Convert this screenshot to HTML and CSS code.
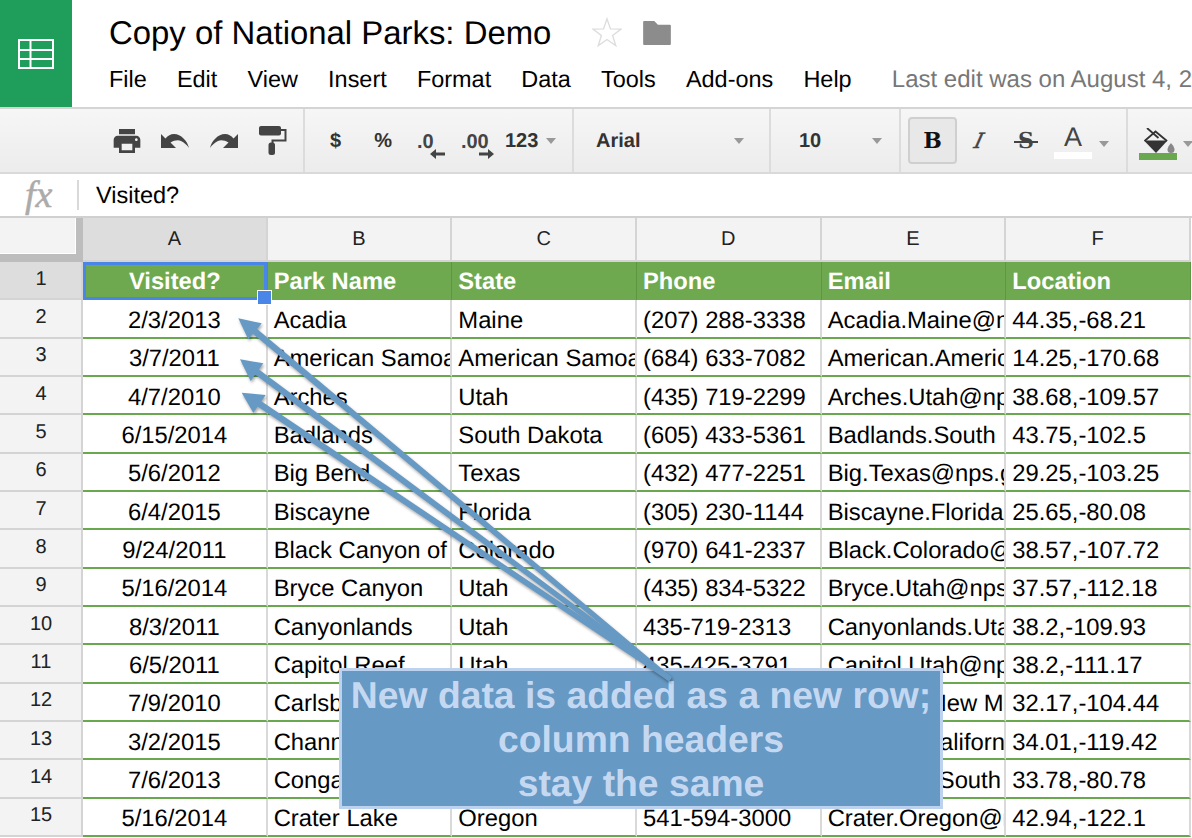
FILE: index.html
```html
<!DOCTYPE html>
<html lang="en">
<head>
<meta charset="utf-8">
<title>Copy of National Parks: Demo</title>
<link rel="stylesheet" href="styles.css">
</head>
<body>
<div class="page">
  <header class="topbar">
    <div class="logo">
      <svg width="36" height="30" viewBox="0 0 36 30"><path class="logo-lines" d="M1 1h34v28H1zM1 11h34M1 20h34M12.500 1v28"/></svg>
    </div>
    <div class="titles">
      <div class="title-row">
        <span class="doc-title">Copy of National Parks: Demo</span>
        <svg class="star" width="30" height="30" viewBox="0 0 32 32"><path d="M16 2l3.700 10.700 11.300.2-9 6.800 3.300 10.800-9.300-6.500-9.300 6.500 3.300-10.800-9-6.800 11.300-.2z"/></svg>
        <svg class="folder" width="30" height="24" viewBox="0 0 30 26"><path d="M1 0h11l4 4h13a1 1 0 0 1 1 1v20a1 1 0 0 1-1 1H1a1 1 0 0 1-1-1V1a1 1 0 0 1 1-1z"/></svg>
      </div>
      <nav class="menu">
        <span>File</span><span>Edit</span><span>View</span><span>Insert</span><span>Format</span><span>Data</span><span>Tools</span><span>Add-ons</span><span>Help</span>
        <span class="last-edit">Last edit was on August 4, 2015</span>
      </nav>
    </div>
  </header>

  <div class="toolbar">
    <div class="group g-actions">
      <svg class="ic ic-print" width="32" height="32" viewBox="0 0 24 24"><path d="M19 8H5c-1.660 0-3 1.340-3 3v6h4v4h12v-4h4v-6c0-1.660-1.340-3-3-3zm-3 11H8v-5h8v5zm3-7c-.55 0-1-.45-1-1s.45-1 1-1 1 .45 1 1-.45 1-1 1zm-1-9H6v4h12V3z"/></svg>
      <svg class="ic ic-undo" width="28" height="16" viewBox="0 0 28 16"><path d="M0 1v14h15l-5.500-5.500C13 7.500 17 6.500 20 8c3 1.500 6 4 8 7C26.500 8 20 1 13 1 9.500 1 7 2.500 4.500 5.500z"/></svg>
      <svg class="ic ic-redo" width="28" height="16" viewBox="0 0 28 16"><path d="M28 1v14H13l5.500-5.500C15 7.500 11 6.500 8 8c-3 1.500-6 4-8 7C1.500 8 8 1 15 1c3.500 0 6 1.500 8.500 4.500z"/></svg>
      <svg class="ic ic-roller" width="28" height="29" viewBox="0 0 28 29"><rect width="22" height="9.500" rx="2"/><path class="roller-arm" d="M21 4h5.500v10.500H13.500V18"/><rect x="9.500" y="16.500" width="6.500" height="12.500" rx="2.500"/></svg>
    </div>
    <div class="group g-format">
      <span class="tb-text t-dollar">$</span>
      <span class="tb-text t-pct">%</span>
      <span class="dec t-dec0"><span>.0</span><svg width="15" height="10" viewBox="0 0 15 10"><path d="M0 5l6-5v3.500h9v3H6V10z"/></svg></span>
      <span class="dec t-dec00"><span>.00</span><svg width="15" height="10" viewBox="0 0 15 10"><path d="M15 5L9 0v3.500H0v3h9V10z"/></svg></span>
      <span class="tb-text t-123">123</span>
      <span class="caret c-123"></span>
    </div>
    <div class="group g-font">
      <span class="tb-text">Arial</span>
      <span class="caret"></span>
    </div>
    <div class="group g-size">
      <span class="tb-text">10</span>
      <span class="caret"></span>
    </div>
    <div class="group g-style">
      <span class="btn-bold">B</span>
      <span class="btn-italic">I</span>
      <span class="btn-strike">S</span>
      <span class="btn-color">A</span>
      <span class="caret c-color"></span>
    </div>
    <div class="group g-fill">
      <span class="fill-icon">
        <svg width="32" height="26" viewBox="0 0 32 26"><path class="bucket-line" d="M0.500 13L11.500 3.500 23 13"/><path class="bucket-line" d="M3 0l11.500 10"/><path d="M0 12.500h23.500L12 25z"/><path class="drop" d="M27 15s-3.500 4-3.500 6.500a3.500 3.500 0 0 0 7 0C30.500 19 27 15 27 15z"/></svg>
      </span>
      <span class="caret c-fill"></span>
    </div>
  </div>

  <div class="formula">
    <span class="fx">fx</span>
    <span class="formula-value">Visited?</span>
  </div>

  <div class="sheet">
    <div class="corner"><div class="corner-inner"></div></div>
    <div class="ch ch-on">A</div><div class="ch">B</div><div class="ch">C</div><div class="ch">D</div><div class="ch">E</div><div class="ch">F</div>

    <div class="rh rh-on">1</div>
    <div class="hc hc-sel">Visited?</div><div class="hc">Park Name</div><div class="hc">State</div><div class="hc">Phone</div><div class="hc">Email</div><div class="hc">Location</div>

    <div class="rh">2</div><div class="c ctr">2/3/2013</div><div class="c">Acadia</div><div class="c">Maine</div><div class="c">(207) 288-3338</div><div class="c">Acadia.Maine@nps.gov</div><div class="c">44.35,-68.21</div>
    <div class="rh">3</div><div class="c ctr">3/7/2011</div><div class="c">American Samoa</div><div class="c">American Samoa</div><div class="c">(684) 633-7082</div><div class="c">American.American</div><div class="c">14.25,-170.68</div>
    <div class="rh">4</div><div class="c ctr">4/7/2010</div><div class="c">Arches</div><div class="c">Utah</div><div class="c">(435) 719-2299</div><div class="c">Arches.Utah@nps.gov</div><div class="c">38.68,-109.57</div>
    <div class="rh">5</div><div class="c ctr">6/15/2014</div><div class="c">Badlands</div><div class="c">South Dakota</div><div class="c">(605) 433-5361</div><div class="c">Badlands.South</div><div class="c">43.75,-102.5</div>
    <div class="rh">6</div><div class="c ctr">5/6/2012</div><div class="c">Big Bend</div><div class="c">Texas</div><div class="c">(432) 477-2251</div><div class="c">Big.Texas@nps.gov</div><div class="c">29.25,-103.25</div>
    <div class="rh">7</div><div class="c ctr">6/4/2015</div><div class="c">Biscayne</div><div class="c">Florida</div><div class="c">(305) 230-1144</div><div class="c">Biscayne.Florida</div><div class="c">25.65,-80.08</div>
    <div class="rh">8</div><div class="c ctr">9/24/2011</div><div class="c">Black Canyon of</div><div class="c">Colorado</div><div class="c">(970) 641-2337</div><div class="c">Black.Colorado@nps</div><div class="c">38.57,-107.72</div>
    <div class="rh">9</div><div class="c ctr">5/16/2014</div><div class="c">Bryce Canyon</div><div class="c">Utah</div><div class="c">(435) 834-5322</div><div class="c">Bryce.Utah@nps.gov</div><div class="c">37.57,-112.18</div>
    <div class="rh">10</div><div class="c ctr">8/3/2011</div><div class="c">Canyonlands</div><div class="c">Utah</div><div class="c">435-719-2313</div><div class="c">Canyonlands.Utah</div><div class="c">38.2,-109.93</div>
    <div class="rh">11</div><div class="c ctr">6/5/2011</div><div class="c">Capitol Reef</div><div class="c">Utah</div><div class="c">435-425-3791</div><div class="c">Capitol.Utah@nps.gov</div><div class="c">38.2,-111.17</div>
    <div class="rh">12</div><div class="c ctr">7/9/2010</div><div class="c">Carlsbad Caverns</div><div class="c">New Mexico</div><div class="c">(575) 785-2232</div><div class="c">Carlsbad.New Mexico</div><div class="c">32.17,-104.44</div>
    <div class="rh">13</div><div class="c ctr">3/2/2015</div><div class="c">Channel Islands</div><div class="c">California</div><div class="c">(805) 658-5730</div><div class="c">Channel.California</div><div class="c">34.01,-119.42</div>
    <div class="rh">14</div><div class="c ctr">7/6/2013</div><div class="c">Congaree</div><div class="c">South Carolina</div><div class="c">(803) 776-4396</div><div class="c">Congaree.South</div><div class="c">33.78,-80.78</div>
    <div class="rh">15</div><div class="c ctr">5/16/2014</div><div class="c">Crater Lake</div><div class="c">Oregon</div><div class="c">541-594-3000</div><div class="c">Crater.Oregon@nps.gov</div><div class="c">42.94,-122.1</div>
  </div>

  <div class="callout">New data is added as a new row;<br>column headers<br>stay the same</div>

  <svg class="arrows" width="1192" height="838" viewBox="0 0 1192 838">
    <polygon points="238.300,318.300 261.700,323.300 257.100,328.900 671.600,677.100 670,680 668.400,680.900 252.900,333.700 248.300,339.300"/>
    <polygon points="240,359.300 263.300,363.300 258.900,369.400 671.500,677 670,680 668.500,681 255.100,374.600 250.700,381"/>
    <polygon points="241.700,392.700 265.700,395 261.300,401.200 671.400,676.900 670,680 668.600,681.100 257.700,406.600 253.300,412.700"/>
  </svg>
</div>
</body>
</html>
```
FILE: styles.css
```css
* { box-sizing: border-box; }
html, body { margin: 0; padding: 0; height: 100%; overflow: hidden; background: #fff; }
body { font-family: "Liberation Sans", Arial, sans-serif; color: #000; text-rendering: geometricPrecision; }
.page { position: relative; width: 1192px; height: 838px; overflow: hidden; }

.topbar { display: flex; height: 109px; border-bottom: 2px solid #d4d4d4; }
.logo { width: 72px; height: 107px; background: #1f9d5a; display: flex; align-items: center; justify-content: center; flex: none; }
.logo-lines { fill: none; stroke: #fff; stroke-width: 2; }
.titles { padding-left: 37px; flex: 1; min-width: 0; }
.title-row { display: flex; align-items: center; height: 66px; }
.doc-title { font-size: 32.900px; white-space: nowrap; }
.star { margin-left: 41px; margin-top: -2px; fill: #fff; stroke: #ddd; stroke-width: 1.500; flex: none; }
.folder { margin-left: 20px; fill: #8c8c8c; flex: none; }
.menu { display: flex; gap: 30.200px; font-size: 23.450px; white-space: nowrap; height: 26px; align-items: center; }
.last-edit { color: #777; margin-left: 10px; margin-top: 2px; font-size: 24px; }

.toolbar { display: flex; height: 65px; background: linear-gradient(#f6f6f6, #ececec); border-bottom: 2px solid #d9d9d9; align-items: stretch; }
.group { display: flex; align-items: center; border-right: 2px solid #dcdcdc; flex: none; }
.g-actions { width: 305px; padding-left: 111px; }
.ic { fill: #444; flex: none; }
.ic-print { margin-right: 18px; }
.ic-undo { margin-right: 21px; }
.ic-redo { margin-right: 21px; }
.roller-arm { fill: none; stroke: #444; stroke-width: 2; }
.g-format { width: 269px; padding-left: 25px; }
.tb-text { font-size: 20px; font-weight: bold; color: #333; margin-top: 2px; }
.t-dollar { margin-right: 33px; }
.t-pct { margin-right: 25px; }
.dec { display: inline-flex; flex-direction: column; font-size: 20px; font-weight: bold; color: #444; line-height: 20px; margin-top: 9px; }
.dec svg { fill: #444; margin-top: -3px; align-self: flex-end; }
.t-dec0 { margin-right: 16px; width: 28px; }
.t-dec00 { margin-right: 11px; width: 33px; }
.caret { width: 0; height: 0; border-left: 5.500px solid transparent; border-right: 5.500px solid transparent; border-top: 6px solid #999; flex: none; }
.c-123 { margin-left: 8px; }
.g-font { width: 197px; padding-left: 22px; justify-content: space-between; padding-right: 25px; }
.g-size { width: 130px; padding-left: 28px; justify-content: space-between; padding-right: 17px; }
.g-style { width: 227px; padding-left: 7px; }
.btn-bold { width: 49px; height: 47px; background: #e8e8e8; border: 2px solid #cfcfcf; border-radius: 4px; font-family: "DejaVu Serif", serif; font-weight: bold; font-size: 22px; display: flex; align-items: center; justify-content: center; color: #111; flex: none; }
.btn-italic { font-family: "DejaVu Serif", serif; font-style: italic; font-size: 21px; color: #444; margin-left: 12px; width: 20px; text-align: center; flex: none; transform: skewX(-14deg); -webkit-text-stroke: .4px #444; }
.btn-strike { position: relative; font-family: "DejaVu Serif", serif; font-weight: bold; font-size: 22px; color: #444; margin-left: 25px; width: 24px; text-align: center; flex: none; }
.btn-strike::after { content: ""; position: absolute; left: 0; right: 0; top: 52%; height: 2px; background: #444; }
.btn-color { font-size: 27px; color: #444; margin-left: 16px; width: 38px; text-align: center; border-bottom: 7px solid #fff; line-height: 30px; flex: none; }
.c-color { margin-left: 6.500px; margin-top: 6px; }
.g-fill { border-right: 0; padding-left: 11px; }
.fill-icon { width: 38px; border-bottom: 7px solid #6aa84f; display: flex; justify-content: flex-start; align-items: flex-start; height: 38px; padding: 6px 0 0 5px; flex: none; }
.fill-icon svg { fill: #333; flex: none; }
.bucket-line { fill: none; stroke: #333; stroke-width: 1.800; }
.fill-icon svg .drop { fill: #888; }
.c-fill { margin-left: 5.500px; margin-top: 6px; }

.formula { height: 44px; display: flex; align-items: center; border-bottom: 2px solid #d0d0d0; background: #fff; }
.fx { font-family: "Liberation Serif", serif; font-style: italic; font-size: 38px; color: #ababab; -webkit-text-stroke: .5px #ababab; width: 79px; padding-left: 25px; border-right: 2px solid #d9d9d9; line-height: 30px; height: 30px; flex: none; }
.formula-value { font-size: 23.500px; margin-left: 17px; margin-top: 1px; }

.sheet { display: grid; grid-template-columns: 83px repeat(6, 184.670px); grid-template-rows: 44px repeat(15, 38.330px); }
.corner { background: #bdbdbd; padding: 0 7px 8px 0; }
.corner-inner { height: 100%; background: #f3f3f3; border-right: 1px solid #fff; border-bottom: 1px solid #fff; }
.ch { background: #f3f3f3; border-right: 2px solid #d4d4d4; border-bottom: 2px solid #d4d4d4; display: flex; align-items: center; justify-content: center; font-size: 20px; color: #222; }
.ch-on { background: #dddddd; }
.rh { background: #f3f3f3; border-right: 2px solid #d4d4d4; border-bottom: 2px solid #d4d4d4; display: flex; align-items: center; justify-content: center; font-size: 20px; color: #222; padding: 0 0 2px 1px; }
.rh-on { background: #dddddd; }
.hc { background: #6fa94f; color: #fff; font-weight: bold; font-size: 23.700px; padding: 3px 6px 0; display: flex; align-items: center; border-right: 1px solid #5f9642; white-space: nowrap; overflow: hidden; }
.hc-sel { justify-content: center; box-shadow: inset 0 0 0 3px #4a86e8; position: relative; overflow: visible; }
.hc-sel::after { content: ""; position: absolute; right: -5px; bottom: -5px; width: 13px; height: 13px; background: #4a86e8; border: 1px solid #fff; z-index: 2; }
.c { font-size: 23.800px; padding: 5px 6px 0; display: flex; align-items: center; background: #fff; border-right: 2px solid #d9d9d9; border-bottom: 2px solid #6aa84f; white-space: nowrap; overflow: hidden; }
.ctr { justify-content: center; }

.arrows { position: absolute; left: 0; top: 0; filter: drop-shadow(1px 2px 1.500px rgba(0, 0, 0, .35)); }
.arrows polygon { fill: #6699c3; }
.callout { position: absolute; left: 339px; top: 668px; width: 604px; height: 141px; background: #6699c3; border: 3px solid #bcd2ee; color: #c5d8f1; font-weight: bold; font-size: 37.300px; line-height: 44px; text-align: center; padding-top: 2px; white-space: nowrap; }
```
